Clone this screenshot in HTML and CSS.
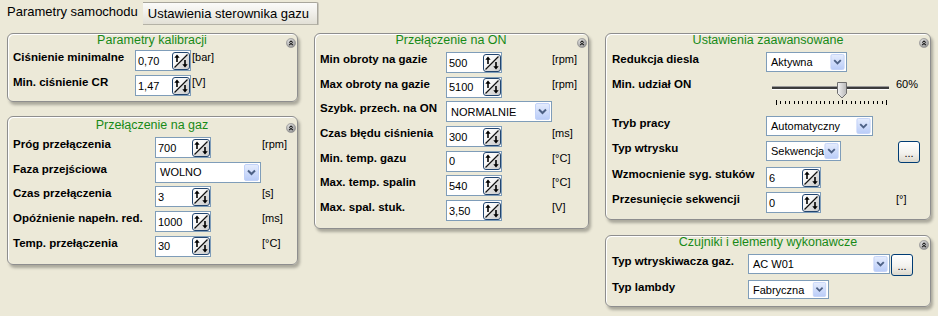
FILE: index.html
```html
<!DOCTYPE html>
<html lang="pl">
<head>
<meta charset="utf-8">
<title>Parametry samochodu</title>
<link rel="stylesheet" href="styles.css">
</head>
<body>
<svg class="defs" xmlns="http://www.w3.org/2000/svg">
  <defs>
    <linearGradient id="sg" x1="0" y1="0" x2="1" y2="1">
      <stop offset="0" stop-color="#ffffff"/>
      <stop offset="0.5" stop-color="#f4f4f4"/>
      <stop offset="0.56" stop-color="#dedede"/>
      <stop offset="1" stop-color="#cdcdcd"/>
    </linearGradient>
    <linearGradient id="ag" x1="0" y1="0" x2="0" y2="1">
      <stop offset="0" stop-color="#e6edfd"/>
      <stop offset="1" stop-color="#b9ccf8"/>
    </linearGradient>
    <radialGradient id="cg" cx="0.4" cy="0.35" r="0.7">
      <stop offset="0" stop-color="#ececec"/>
      <stop offset="1" stop-color="#8a8a8a"/>
    </radialGradient>
    <linearGradient id="tg" x1="0" y1="0" x2="1" y2="0">
      <stop offset="0" stop-color="#f2f2f2"/>
      <stop offset="1" stop-color="#b8b8b8"/>
    </linearGradient>
    <symbol id="spn" viewBox="0 0 18 18">
      <rect x="0.5" y="0.5" width="17" height="17" rx="2.5" fill="url(#sg)" stroke="#22456f"/>
      <path d="M2.5 15.5 L15.5 2.5" stroke="#111" stroke-width="1.3"/>
      <path d="M5 10 V4.5" stroke="#000" stroke-width="1.6"/>
      <path d="M2.3 5.8 L5 2.4 L7.7 5.8 Z" fill="#000"/>
      <path d="M13 8 V13.5" stroke="#000" stroke-width="1.6"/>
      <path d="M10.3 12.2 L13 15.6 L15.7 12.2 Z" fill="#000"/>
    </symbol>
    <symbol id="arr" viewBox="0 0 15 17">
      <rect x="0.5" y="0.5" width="14" height="16" rx="1.5" fill="url(#ag)" stroke="#c2d2f8"/>
      <path d="M4 6.5 L7.5 10 L11 6.5" fill="none" stroke="#4d6185" stroke-width="2"/>
    </symbol>
    <symbol id="col" viewBox="0 0 10 10">
      <circle cx="5" cy="5" r="4.6" fill="url(#cg)" stroke="#909090" stroke-width="0.6"/>
      <path d="M3.2 4.6 L5 2.9 L6.8 4.6 M3.2 7 L5 5.3 L6.8 7" fill="none" stroke="#222" stroke-width="1.1"/>
    </symbol>
  </defs>
</svg>

<div class="tabs">
  <div class="tab tab-active">Parametry samochodu</div>
  <div class="tab tab-idle">Ustawienia sterownika gazu</div>
</div>

<div class="main">
  <div class="col col1">
    <section class="panel p1">
      <div class="ph"><span class="pt">Parametry kalibracji</span><svg class="cb"><use href="#col"/></svg></div>
      <div class="rows">
        <div class="row"><span class="lbl">Ciśnienie minimalne</span><div class="spin"><span>0,70</span><svg><use href="#spn"/></svg></div><span class="unit">[bar]</span></div>
        <div class="row"><span class="lbl">Min. ciśnienie CR</span><div class="spin"><span>1,47</span><svg><use href="#spn"/></svg></div><span class="unit">[V]</span></div>
      </div>
    </section>

    <section class="panel p2">
      <div class="ph"><span class="pt">Przełączenie na gaz</span><svg class="cb"><use href="#col"/></svg></div>
      <div class="rows">
        <div class="row"><span class="lbl">Próg przełączenia</span><div class="spin"><span>700</span><svg><use href="#spn"/></svg></div><span class="unit">[rpm]</span></div>
        <div class="row"><span class="lbl">Faza przejściowa</span><div class="sel w106"><span>WOLNO</span><svg><use href="#arr"/></svg></div></div>
        <div class="row"><span class="lbl">Czas przełączenia</span><div class="spin"><span>3</span><svg><use href="#spn"/></svg></div><span class="unit">[s]</span></div>
        <div class="row"><span class="lbl">Opóźnienie napełn. red.</span><div class="spin"><span>1000</span><svg><use href="#spn"/></svg></div><span class="unit">[ms]</span></div>
        <div class="row"><span class="lbl">Temp. przełączenia</span><div class="spin"><span>30</span><svg><use href="#spn"/></svg></div><span class="unit">[°C]</span></div>
      </div>
    </section>
  </div>

  <div class="col col2">
    <section class="panel p3">
      <div class="ph"><span class="pt">Przełączenie na ON</span><svg class="cb"><use href="#col"/></svg></div>
      <div class="rows">
        <div class="row"><span class="lbl">Min obroty na gazie</span><div class="spin"><span>500</span><svg><use href="#spn"/></svg></div><span class="unit">[rpm]</span></div>
        <div class="row"><span class="lbl">Max obroty na gazie</span><div class="spin"><span>5100</span><svg><use href="#spn"/></svg></div><span class="unit">[rpm]</span></div>
        <div class="row"><span class="lbl">Szybk. przech. na ON</span><div class="sel w106"><span>NORMALNIE</span><svg><use href="#arr"/></svg></div></div>
        <div class="row"><span class="lbl">Czas błędu ciśnienia</span><div class="spin"><span>300</span><svg><use href="#spn"/></svg></div><span class="unit">[ms]</span></div>
        <div class="row"><span class="lbl">Min. temp. gazu</span><div class="spin"><span>0</span><svg><use href="#spn"/></svg></div><span class="unit">[°C]</span></div>
        <div class="row"><span class="lbl">Max. temp. spalin</span><div class="spin"><span>540</span><svg><use href="#spn"/></svg></div><span class="unit">[°C]</span></div>
        <div class="row"><span class="lbl">Max. spal. stuk.</span><div class="spin"><span>3,50</span><svg><use href="#spn"/></svg></div><span class="unit">[V]</span></div>
      </div>
    </section>
  </div>

  <div class="col col3">
    <section class="panel p4">
      <div class="ph"><span class="pt">Ustawienia zaawansowane</span><svg class="cb"><use href="#col"/></svg></div>
      <div class="rows">
        <div class="row"><span class="lbl">Redukcja diesla</span><div class="sel w81 h20"><span>Aktywna</span><svg><use href="#arr"/></svg></div></div>
        <div class="row row-slider"><span class="lbl">Min. udział ON</span>
          <svg class="slider" viewBox="0 0 126 32" width="126" height="32">
            <rect x="6" y="9" width="117" height="1" fill="#9a9a9a"/>
            <rect x="6" y="10" width="117" height="2" fill="#3c3c3c"/>
            <rect x="6" y="12" width="117" height="1" fill="#ffffff"/>
            <path d="M71.5 5.5 H80.5 V16.5 L76 21 L71.5 16.5 Z" fill="url(#tg)" stroke="#6e6e6e"/>
            <path d="M10.5 23 V28 M120.5 23 V28" stroke="#000"/>
            <path d="M14.5 24V27M19.5 24V27M23.5 24V27M28.5 24V27M32.5 24V27M36.5 24V27M41.5 24V27M45.5 24V27M50.5 24V27M54.5 24V27M58.5 24V27M63.5 24V27M67.5 24V27M72.5 24V27M76.5 23V27M80.5 24V27M85.5 24V27M89.5 24V27M94.5 24V27M98.5 24V27M102.5 24V27M107.5 24V27M111.5 24V27M116.5 24V27" stroke="#000"/>
          </svg>
          <span class="pct">60%</span>
        </div>
        <div class="row"><span class="lbl">Tryb pracy</span><div class="sel w107 h20"><span>Automatyczny</span><svg><use href="#arr"/></svg></div></div>
        <div class="row"><span class="lbl">Typ wtrysku</span><div class="sel w75 h20"><span>Sekwencja</span><svg><use href="#arr"/></svg></div><button class="btn btn-far">...</button></div>
        <div class="row"><span class="lbl">Wzmocnienie syg. stuków</span><div class="spin w55"><span>6</span><svg><use href="#spn"/></svg></div></div>
        <div class="row"><span class="lbl">Przesunięcie sekwencji</span><div class="spin w55"><span>0</span><svg><use href="#spn"/></svg></div><span class="unit">[°]</span></div>
      </div>
    </section>

    <section class="panel p5">
      <div class="ph"><span class="pt">Czujniki i elementy wykonawcze</span><svg class="cb"><use href="#col"/></svg></div>
      <div class="rows">
        <div class="row"><span class="lbl">Typ wtryskiwacza gaz.</span><div class="sel w142 h20"><span>AC W01</span><svg><use href="#arr"/></svg></div><button class="btn">...</button></div>
        <div class="row"><span class="lbl">Typ lambdy</span><div class="sel w81 h19"><span>Fabryczna</span><svg><use href="#arr"/></svg></div></div>
      </div>
    </section>
  </div>
</div>
</body>
</html>
```

FILE: styles.css
```css
html, body {
  margin: 0;
  padding: 0;
}
body {
  width: 938px;
  height: 316px;
  overflow: hidden;
  background: #ece9d8;
  font-family: "Liberation Sans", Arial, sans-serif;
  color: #000;
}
.defs {
  display: block;
  width: 0;
  height: 0;
  overflow: hidden;
}

/* tabs */
.tabs {
  display: flex;
  align-items: flex-start;
  height: 27px;
  padding-left: 2px;
}
.tab {
  font-size: 13px;
  white-space: nowrap;
  box-sizing: border-box;
}
.tab-active {
  height: 27px;
  padding: 0 5px;
  line-height: 24px;
  background: #ece9d8;
}
.tab-idle {
  margin-top: 2px;
  height: 23px;
  padding: 0 8px 0 5px;
  line-height: 21px;
  border: 1px solid #a8a69c;
  border-left: none;
  border-bottom-color: #b4b2a6;
  border-radius: 0 2px 0 0;
  background: linear-gradient(#fbfbf9, #f1f0eb 45%, #e2e0d6);
  box-shadow: 1px 0 0 #c9c7bc;
}

/* layout */
.main {
  display: flex;
  gap: 16px;
  padding: 6px 0 0 7px;
}
.col {
  display: flex;
  flex-direction: column;
}
.col1 { width: 291px; gap: 14px; }
.col2 { width: 275px; }
.col3 { width: 326px; gap: 15px; }

/* panels */
.panel {
  border: 1px solid #8e8e8e;
  border-radius: 6px;
  box-shadow: inset 1px 1px 0 #ffffff, 2px 3px 3px rgba(0, 0, 0, 0.28);
  padding: 0 6px 5px 5px;
}
.p2 { padding-bottom: 7px; }
.p3 { padding-bottom: 7px; }
.p4 { padding: 0 6px 6px 6px; }
.p5 { padding: 0 6px 5px 6px; }

.ph {
  display: grid;
  grid-template-columns: 12px 1fr 12px;
  align-items: start;
  height: 18px;
}
.p1 .ph { height: 16px; }
.p2 .ph { height: 18px; padding-top: 2px; }
.pt {
  grid-column: 2;
  text-align: center;
  font-size: 12.5px;
  line-height: 13px;
  color: #178a17;
  white-space: nowrap;
}
.cb {
  grid-column: 3;
  justify-self: end;
  width: 10px;
  height: 10px;
  margin-top: 4px;
  margin-right: -5px;
}

.rows {
  display: flex;
  flex-direction: column;
  gap: 4px;
}
.p2 .rows, .p3 .rows { gap: 3.7px; }

.row {
  display: flex;
  align-items: flex-start;
  min-height: 21px;
}
.lbl {
  flex: none;
  font-weight: bold;
  font-size: 11.5px;
  line-height: 15px;
  white-space: nowrap;
}
.p1 .lbl { width: 122px; }
.p2 .lbl { width: 142px; }
.p3 .lbl { width: 126px; }
.p4 .lbl { width: 154px; }
.p5 .lbl { width: 136px; }

.unit, .pct {
  font-size: 11px;
  line-height: 15px;
  white-space: nowrap;
}
.p1 .unit { margin-left: 1px; }
.p2 .unit { margin-left: 51px; }
.p3 .unit { margin-left: 50px; }
.p4 .unit { margin-left: 75px; }

/* spin edit */
.spin {
  flex: none;
  box-sizing: border-box;
  width: 56px;
  height: 21px;
  border: 1px solid #7f9db9;
  background: #fff;
  display: flex;
  align-items: center;
  justify-content: space-between;
  padding-left: 2px;
  font-size: 11px;
}
.spin.w55 { width: 55px; }
.spin svg {
  flex: none;
  width: 18px;
  height: 18px;
}

/* combo box */
.sel {
  flex: none;
  box-sizing: border-box;
  height: 21px;
  border: 1px solid #7f9db9;
  background: #fff;
  display: flex;
  align-items: stretch;
  justify-content: space-between;
  padding: 1px;
  font-size: 11px;
}
.sel span {
  padding-left: 3px;
  align-self: center;
  white-space: nowrap;
}
.sel svg {
  flex: none;
  width: 15px;
  height: 100%;
}
.sel.h20 { height: 20px; }
.sel.h19 { height: 19px; }
.w75 { width: 75px; }
.w81 { width: 81px; }
.w106 { width: 106px; }
.w107 { width: 107px; }
.w142 { width: 142px; }

/* button */
.btn {
  flex: none;
  box-sizing: border-box;
  width: 22px;
  height: 22px;
  margin: 0 0 0 1px;
  padding: 0 0 3px 0;
  border: 1px solid #003c74;
  border-radius: 3px;
  background: linear-gradient(#ffffff, #f3f2ee 55%, #dcd8cc);
  font-family: "Liberation Sans", Arial, sans-serif;
  font-size: 11px;
  line-height: 1;
  color: #000;
  display: flex;
  align-items: flex-end;
  justify-content: center;
}
.btn-far { margin-left: 57px; }

/* slider */
.row-slider { height: 35px; }
.slider {
  flex: none;
  display: block;
}
.pct { margin-left: 4px; }
```
